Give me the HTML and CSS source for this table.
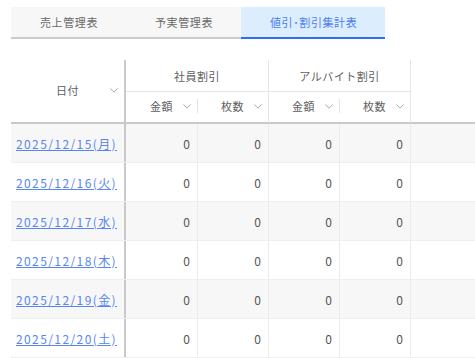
FILE: index.html
```html
<!DOCTYPE html>
<html lang="ja">
<head>
<meta charset="utf-8">
<title>値引・割引集計表</title>
<link rel="stylesheet" href="styles.css">
</head>
<body>
<div class="page">
  <nav class="tabs">
    <div class="tab">売上管理表</div>
    <div class="tab">予実管理表</div>
    <div class="tab active">値引･割引集計表</div>
  </nav>

  <div class="table">
    <div class="thead">
      <div class="h-date">
        <span></span>
        <span class="h-label">日付</span>
        <svg class="chev" viewBox="0 0 8 5" width="8" height="5"><polyline points="0.5,0.5 4,4.2 7.5,0.5"/></svg>
      </div>
      <div class="h-group g1">社員割引</div>
      <div class="h-group g2">アルバイト割引</div>
      <div class="h-fill"></div>
      <div class="h-sub c1"><span class="h-label">金額</span><svg class="chev" viewBox="0 0 8 5" width="8" height="5"><polyline points="0.5,0.5 4,4.2 7.5,0.5"/></svg></div>
      <div class="h-sub c2"><i class="sep"></i><span class="h-label">枚数</span><svg class="chev" viewBox="0 0 8 5" width="8" height="5"><polyline points="0.5,0.5 4,4.2 7.5,0.5"/></svg></div>
      <div class="h-sub c3 lined"><span class="h-label">金額</span><svg class="chev" viewBox="0 0 8 5" width="8" height="5"><polyline points="0.5,0.5 4,4.2 7.5,0.5"/></svg></div>
      <div class="h-sub c4"><i class="sep"></i><span class="h-label">枚数</span><svg class="chev" viewBox="0 0 8 5" width="8" height="5"><polyline points="0.5,0.5 4,4.2 7.5,0.5"/></svg></div>
    </div>

    <div class="row odd">
      <div class="cell date"><a href="#">2025/12/15(月)</a></div>
      <div class="cell num">0</div><div class="cell num lined">0</div><div class="cell num lined">0</div><div class="cell num lined">0</div><div class="cell fill lined"></div>
    </div>
    <div class="row">
      <div class="cell date"><a href="#">2025/12/16(火)</a></div>
      <div class="cell num">0</div><div class="cell num lined">0</div><div class="cell num lined">0</div><div class="cell num lined">0</div><div class="cell fill lined"></div>
    </div>
    <div class="row odd">
      <div class="cell date"><a href="#">2025/12/17(水)</a></div>
      <div class="cell num">0</div><div class="cell num lined">0</div><div class="cell num lined">0</div><div class="cell num lined">0</div><div class="cell fill lined"></div>
    </div>
    <div class="row">
      <div class="cell date"><a href="#">2025/12/18(木)</a></div>
      <div class="cell num">0</div><div class="cell num lined">0</div><div class="cell num lined">0</div><div class="cell num lined">0</div><div class="cell fill lined"></div>
    </div>
    <div class="row odd">
      <div class="cell date"><a href="#">2025/12/19(金)</a></div>
      <div class="cell num">0</div><div class="cell num lined">0</div><div class="cell num lined">0</div><div class="cell num lined">0</div><div class="cell fill lined"></div>
    </div>
    <div class="row">
      <div class="cell date"><a href="#">2025/12/20(土)</a></div>
      <div class="cell num">0</div><div class="cell num lined">0</div><div class="cell num lined">0</div><div class="cell num lined">0</div><div class="cell fill lined"></div>
    </div>
  </div>
</div>
</body>
</html>
```

FILE: styles.css
```css
* { box-sizing: border-box; }

html, body {
  margin: 0;
  padding: 0;
  background: #ffffff;
  overflow: hidden;
}

body {
  font-family: "Noto Sans CJK JP", "Noto Sans", sans-serif;
  color: #555555;
}

.page {
  padding: 7px 0 0 11px;
}

/* ---------- tabs ---------- */
.tabs {
  display: inline-flex;
  border-bottom: 2px solid #cccccc;
}

.tab {
  height: 32px;
  padding: 0 28px 0 29px;
  display: flex;
  align-items: center;
  background: #f7f7f7;
  color: #6a6a6a;
  font-size: 11px;
  letter-spacing: 0.6px;
  margin-bottom: -2px;
  border-bottom: 2px solid #cccccc;
}

.tab.active {
  background: #dcedfe;
  color: #4a7ff0;
  border-bottom-color: #2f6ff0;
}

/* ---------- table ---------- */
.table {
  margin-top: 21px;
}

.thead,
.row {
  display: grid;
  grid-template-columns: 115px 71px 71px 71px 71px 1fr;
}

.thead {
  grid-template-rows: 32px 32px;
}

.h-label {
  font-size: 11px;
  color: #606060;
  letter-spacing: 0.5px;
}

.chev {
  display: block;
  fill: none;
  stroke: #a0a0a0;
  stroke-width: 0.9;
}

.h-date {
  grid-row: 1 / span 2;
  grid-column: 1;
  display: grid;
  grid-template-columns: 1fr auto 1fr;
  align-items: center;
  padding: 0 6px 2px 6px;
  border-right: 2px solid #c9c9c9;
  border-bottom: 2px solid #c9c9c9;
}

.h-date .chev {
  justify-self: end;
}

.h-group {
  display: flex;
  align-items: center;
  justify-content: center;
  font-size: 11px;
  letter-spacing: 0.5px;
  color: #606060;
  border-bottom: 1px solid #e6e6e6;
}

.h-group.g1 { grid-column: 2 / span 2; }
.h-group.g2 { grid-column: 4 / span 2; border-left: 1px solid #e6e6e6; }

.h-fill {
  grid-row: 1 / span 2;
  grid-column: 6;
  border-left: 1px solid #e6e6e6;
  border-bottom: 2px solid #c9c9c9;
}

.h-sub {
  grid-row: 2;
  display: flex;
  align-items: center;
  justify-content: flex-end;
  padding: 0 6px 2px 0;
  border-bottom: 2px solid #c9c9c9;
}

.h-sub .chev {
  margin-left: 10px;
}

.h-sub.lined {
  border-left: 1px solid #e6e6e6;
}

.sep {
  width: 1px;
  height: 14px;
  background: #e3e3e3;
  margin-right: auto;
}

.row {
  height: 39px;
  border-bottom: 1px solid #efefef;
}

.row.odd {
  background: #f7f7f7;
}

.cell {
  display: flex;
  align-items: center;
  font-size: 12px;
}

.cell.lined {
  border-left: 1px solid #ebebeb;
}

.cell.date {
  padding-left: 5px;
  border-right: 2px solid #c9c9c9;
}

.cell.date a {
  color: #5786f0;
  text-decoration: underline;
  font-size: 12px;
  letter-spacing: 1.4px;
}

.cell.num {
  justify-content: flex-end;
  padding-right: 7px;
  color: #555555;
}
```
